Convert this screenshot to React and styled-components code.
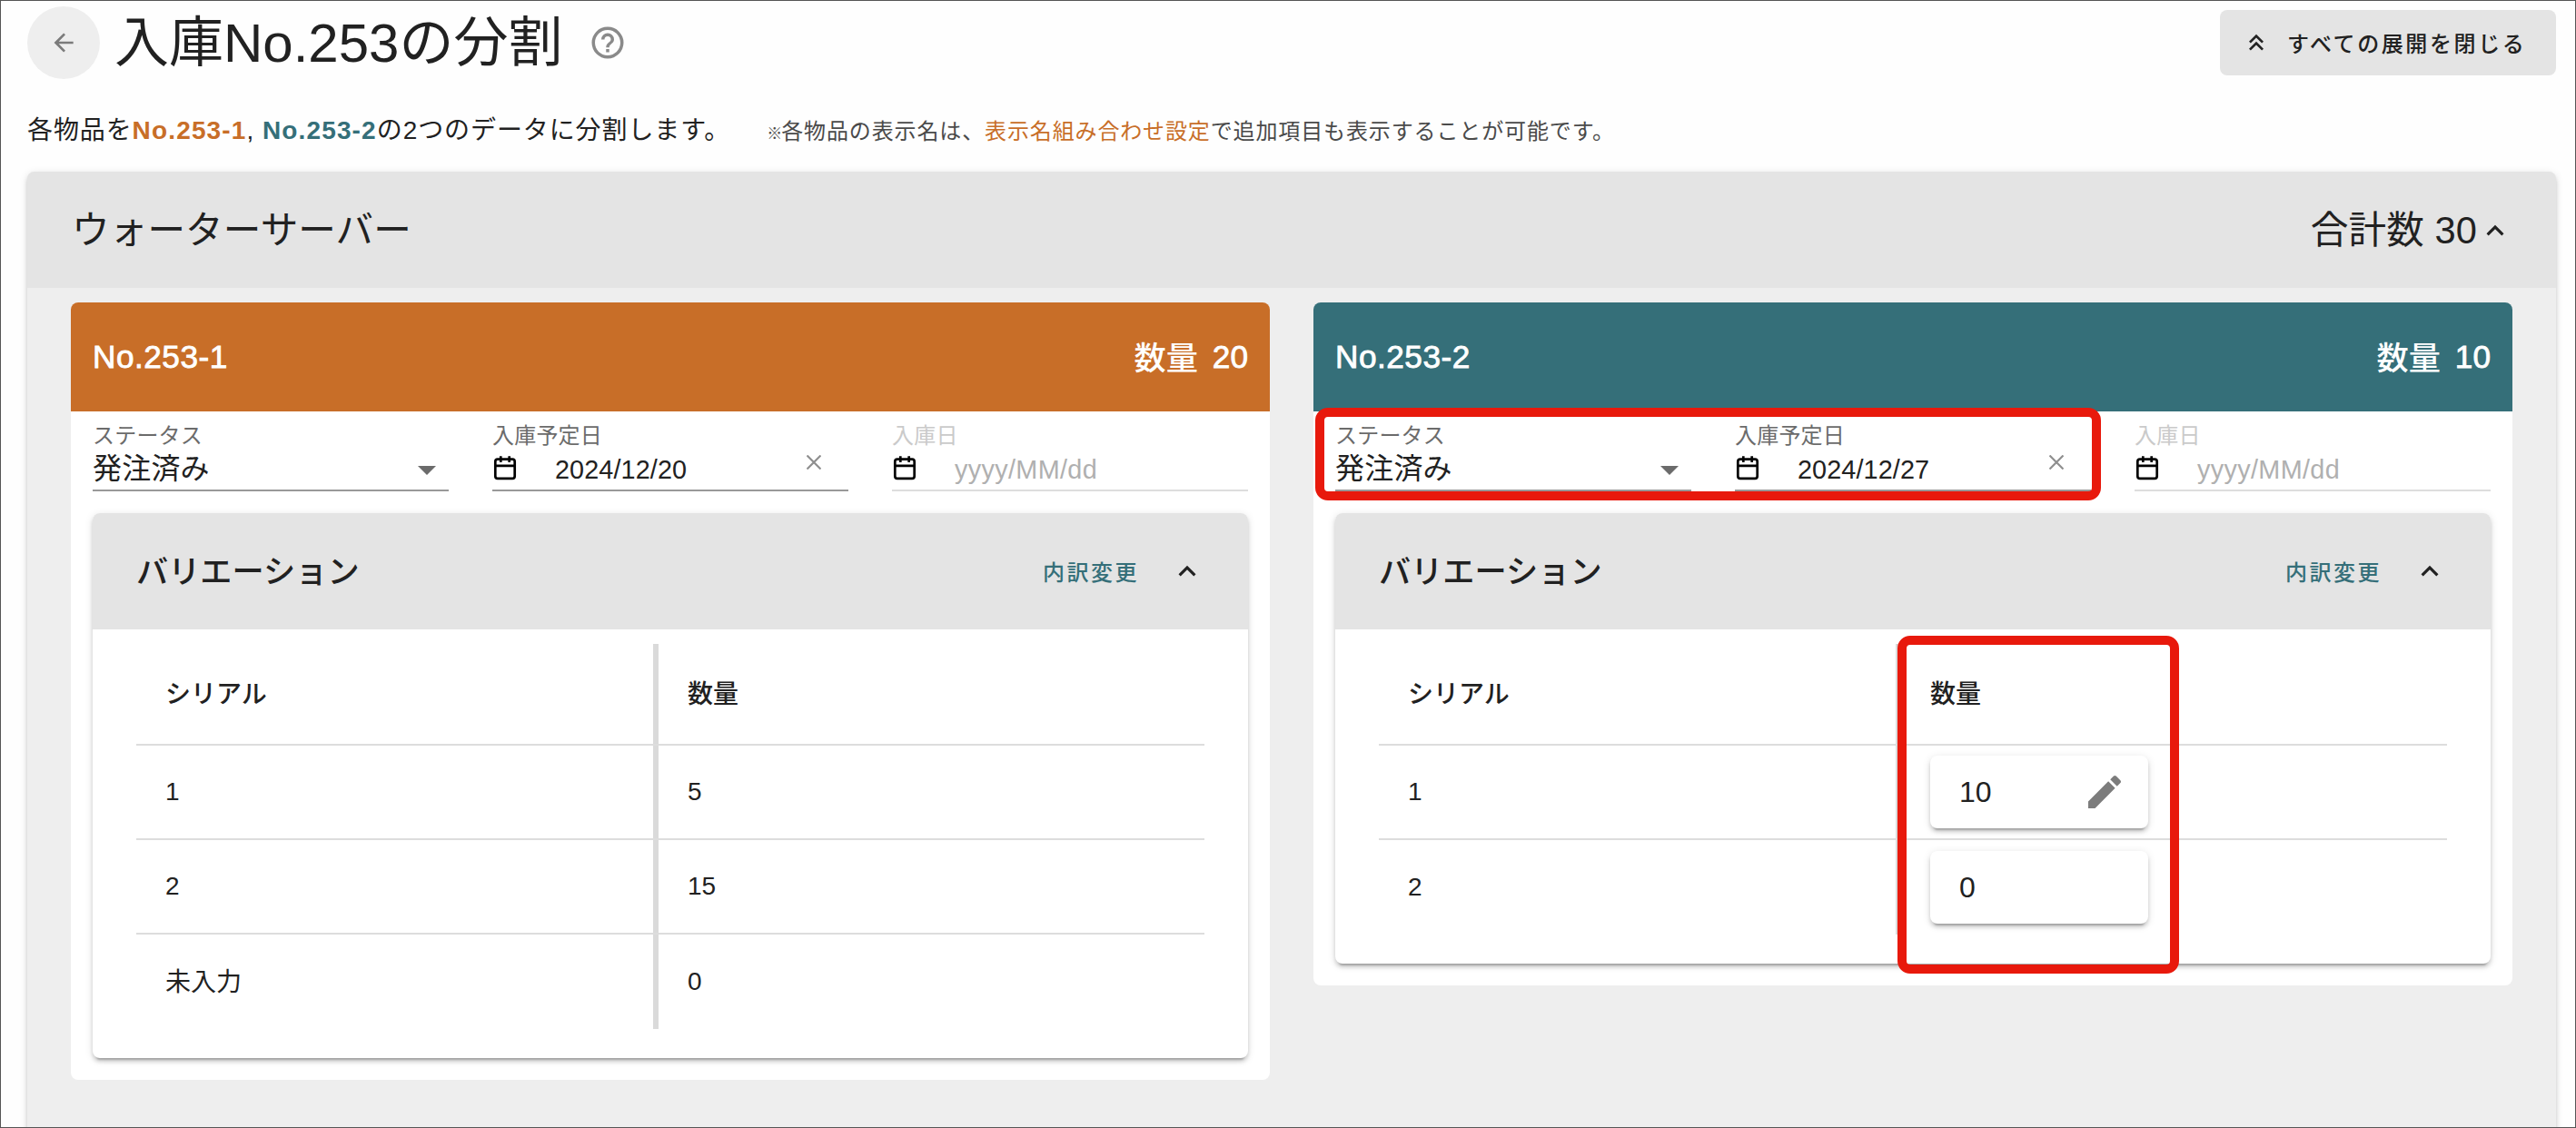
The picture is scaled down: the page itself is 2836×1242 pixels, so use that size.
import React, { useState } from 'react';
import styled, { createGlobalStyle } from 'styled-components';

const GlobalStyle = createGlobalStyle`
    * {
        box-sizing: border-box;
    }
    body {
        margin: 0;
        background: #fefefe;
        color: #212121;
        font-family: "Liberation Sans", "Noto Sans CJK JP", sans-serif;
        font-size: 28px;
    }
    button {
        font-family: inherit;
        color: inherit;
        border: 0;
        padding: 0;
        background: none;
        cursor: pointer;
    }
`
const ORANGE = '#c86e28'
const TEAL = '#356f79'

const shadow = `
    box-shadow: 0 6px 2px -4px rgba(0, 0, 0, 0.2), 0 4px 4px 0 rgba(0, 0, 0, 0.14), 0 2px 10px 0 rgba(0, 0, 0, 0.12);
`
const Page = styled.div`
    width: 2836px;
    height: 1242px;
    padding: 6px 21px 0 29px;
    border: 1px solid #555;
    overflow: hidden;
`
const Head = styled.header`
    display: flex;
    align-items: center;
    height: 80px;
`
const BackButton = styled.button`
    display: flex;
    align-items: center;
    justify-content: center;
    width: 80px;
    height: 80px;
    border-radius: 50%;
    background: #eee;
    color: #7b7b7b;
`
const Title = styled.h1`
    margin: 0 0 0 16px;
    padding-top: 1px;
    font-size: 60px;
    line-height: 80px;
    font-weight: 400;
    white-space: nowrap;
`
const Help = styled.span`
    display: flex;
    margin-left: 29px;
    color: #8a8a8a;
`
const CloseAll = styled.button`
    display: flex;
    align-items: center;
    width: 370px;
    height: 72px;
    margin-left: auto;
    padding-left: 24px;
    border-radius: 8px;
    background: #e4e4e4;
    font-size: 24px;
    font-weight: 500;
    letter-spacing: 2.6px;
    white-space: nowrap;

    svg {
        margin-right: 18px;
    }
`
const CloseText = styled.span`
    padding-bottom: 2px;
`
const Lead = styled.p`
    display: flex;
    align-items: baseline;
    height: 42px;
    margin: 36px 0 24px;
    line-height: 42px;
    letter-spacing: 0.9px;
    white-space: nowrap;
`
const No = styled.b`
    letter-spacing: 1.15px;
    color: ${({ color }) => color};
`
const Note = styled.small`
    margin-left: 40px;
    font-size: 24px;
    letter-spacing: 0.87px;
    color: #4a4a4a;

    a {
        color: ${ORANGE};
        text-decoration: none;
    }
`
const Mark = styled.span`
    font-size: 17px;
    letter-spacing: -1px;
`
const Panel = styled.section`
    height: 1100px;
    border-radius: 8px;
    background: #eee;
    ${shadow}
`
const PanelHead = styled.div`
    display: flex;
    align-items: center;
    justify-content: space-between;
    height: 128px;
    padding: 0 48px 0 49px;
    border-radius: 8px 8px 0 0;
    background: #e4e4e4;
    font-size: 41.6px;
`
const PanelText = styled.span`
    padding-bottom: 6px;
    letter-spacing: 0.1px;
`
const Total = styled.span`
    display: flex;
    align-items: center;

    svg {
        margin: 1px 0 0 1px;
    }
`
const Columns = styled.div`
    display: flex;
    align-items: flex-start;
    gap: 48px;
    padding: 16px 48px;
`
const Card = styled.article`
    position: relative;
    width: 1320px;
    padding-bottom: 24px;
    border-radius: 8px;
    background: #fff;
`
const CardHead = styled.div`
    display: flex;
    align-items: center;
    justify-content: space-between;
    height: 120px;
    padding: 0 24px;
    border-radius: 8px 8px 0 0;
    background: ${({ color }) => color};
    color: #fff;
    font-size: 35.2px;
`
const Latin = styled.span`
    letter-spacing: ${({ spacing }) => spacing || 0}px;
    -webkit-text-stroke: 0.8px #fff;
`
const Count = styled.span`
    display: flex;
    align-items: center;
    gap: 16px;
`
const CountLabel = styled.span`
    padding-bottom: 4px;
    font-weight: 500;
`
const Fields = styled.div`
    display: flex;
    gap: 48px;
    padding: 14px 24px 24px;
`
const Field = styled.div`
    width: 392px;
    border-bottom: 2px solid ${({ disabled }) => (disabled ? '#ddd' : '#999')};
`
const Label = styled.div`
    height: 24px;
    font-size: 24px;
    line-height: 25px;
    letter-spacing: 0.2px;
    color: ${({ disabled }) => (disabled ? '#cacaca' : '#6b6b6b')};
`
const Control = styled.div`
    display: flex;
    align-items: center;
    height: 48px;
    line-height: 48px;
    font-size: 32px;
`
const Value = styled.span`
    padding-top: 2px;
    letter-spacing: 0.2px;
`
const Caret = styled.span`
    margin: 6px 14px 0 auto;
    border: 10px solid transparent;
    border-top-color: #6b6b6b;
    border-bottom: 0;
`
const DateText = styled.span`
    margin-left: 41px;
    padding-top: 3px;
    font-size: 28.8px;
    letter-spacing: ${({ disabled }) => (disabled ? 0.35 : 0.1)}px;
    color: ${({ disabled }) => (disabled ? '#b0b0b0' : 'inherit')};
`
const Clear = styled.button`
    display: flex;
    margin: 0 30px 12px auto;
    color: #8f8f8f;
`
const Variation = styled.div`
    margin: 0 24px;
    border-radius: 8px;
    ${shadow}
`
const VariationHead = styled.div`
    display: flex;
    align-items: center;
    height: 128px;
    padding: 0 48px;
    border-radius: 8px 8px 0 0;
    background: #e4e4e4;
`
const VariationTitle = styled.h2`
    margin: 0;
    padding-bottom: 5px;
    font-size: 35.2px;
    font-weight: 500;
`
const Breakdown = styled.button`
    margin: 0 34px 0 auto;
    padding-bottom: 2px;
    font-size: 24px;
    font-weight: 500;
    letter-spacing: 2.5px;
    color: ${TEAL};
`
const Table = styled.div`
    padding: 16px 48px 32px;
`
const Row = styled.div`
    display: flex;
    height: ${({ head }) => (head ? '112px' : '104px')};
    font-weight: ${({ head }) => (head ? 500 : 400)};
    border-bottom: 2px solid #ddd;

    &:last-child {
        border-bottom: 0;
    }
`
const Cell = styled.div`
    display: flex;
    align-items: center;
    flex: 1;
    padding-left: 32px;

    &:first-child {
        flex: 0 0 575px;
        border-right: 6px solid #dadada;
    }
`
const CellText = styled.span`
    padding-bottom: ${({ lift }) => (lift ? '4px' : 0)};
`
const Quantity = styled.div`
    display: flex;
    align-items: center;
    justify-content: space-between;
    width: 240px;
    height: 80px;
    padding: 0 24px 0 32px;
    border-radius: 8px;
    background: #fff;
    font-size: 32px;
    ${shadow}

    svg {
        color: #7c7c7c;
    }
`
// red frame drawn over the parts of the card being explained
const Highlight = styled.div`
    position: absolute;
    left: ${({ x }) => x}px;
    top: ${({ y }) => y}px;
    width: ${({ w }) => w}px;
    height: ${({ h }) => h}px;
    border: 10px solid #e8190c;
    border-radius: 14px;
    pointer-events: none;
`

const icons = {
    back: 'M20,11V13H8L13.5,18.5L12.08,19.92L4.16,12L12.08,4.08L13.5,5.5L8,11H20Z',
    help: 'M11,18H13V16H11V18M12,2A10,10 0 0,0 2,12A10,10 0 0,0 12,22A10,10 0 0,0 22,12A10,10 0 0,0 12,2M12,20C7.59,20 4,16.41 4,12C4,7.59 7.59,4 12,4C16.41,4 20,7.59 20,12C20,16.41 16.41,20 12,20M12,6A4,4 0 0,0 8,10H10A2,2 0 0,1 12,8A2,2 0 0,1 14,10C14,12 11,11.75 11,15H13C13,12.75 16,12.5 16,10A4,4 0 0,0 12,6Z',
    up: 'M7.41,15.41L12,10.83L16.59,15.41L18,14L12,8L6,14L7.41,15.41Z',
    doubleUp: 'M7.41,18.41L6,17L12,11L18,17L16.59,18.41L12,13.83L7.41,18.41M7.41,12.41L6,11L12,5L18,11L16.59,12.41L12,7.83L7.41,12.41Z',
    pencil: 'M20.71,7.04C21.1,6.65 21.1,6 20.71,5.63L18.37,3.29C18,2.9 17.35,2.9 16.96,3.29L15.12,5.12L18.87,8.87M3,17.25V21H6.75L17.81,9.93L14.06,6.18L3,17.25Z',
}

function Icon({ name, size }) {
    return (
        <svg width={size} height={size} viewBox="0 0 24 24" fill="currentColor">
            <path d={icons[name]} />
        </svg>
    )
}

function CalendarIcon() {
    return (
        <svg width="28" height="28" viewBox="0 0 28 28" fill="none" stroke="#000" strokeWidth="2.7">
            <rect x="3.3" y="4.6" width="21.4" height="21.2" rx="2.6" />
            <path d="M3.3 11.8H24.7M9.3 1.2V8M18.7 1.2V8" />
        </svg>
    )
}

function DateField({ label, value }) {
    return (
        <Field disabled={!value}>
            <Label disabled={!value}>{label}</Label>
            <Control>
                <CalendarIcon />
                <DateText disabled={!value}>{value || 'yyyy/MM/dd'}</DateText>
                {value && (
                    <Clear aria-label="クリア">
                        <svg width="16" height="16" viewBox="0 0 16 16" stroke="currentColor" strokeWidth="2.2">
                            <path d="M0.5 0.5L15.5 15.5M15.5 0.5L0.5 15.5" />
                        </svg>
                    </Clear>
                )}
            </Control>
        </Field>
    )
}

function SplitCard({ no, color, count, date, rows, editable, children }) {
    return (
        <Card>
            <CardHead color={color}>
                <Latin spacing={0.5}>{no}</Latin>
                <Count>
                    <CountLabel>数量</CountLabel>
                    <Latin>{count}</Latin>
                </Count>
            </CardHead>
            <Fields>
                <Field>
                    <Label>ステータス</Label>
                    <Control>
                        <Value>発注済み</Value>
                        <Caret />
                    </Control>
                </Field>
                <DateField label="入庫予定日" value={date} />
                <DateField label="入庫日" />
            </Fields>
            <Variation>
                <VariationHead>
                    <VariationTitle>バリエーション</VariationTitle>
                    <Breakdown>内訳変更</Breakdown>
                    <Icon name="up" size={38} />
                </VariationHead>
                <Table>
                    <Row head>
                        <Cell><CellText lift>シリアル</CellText></Cell>
                        <Cell><CellText lift>数量</CellText></Cell>
                    </Row>
                    {rows.map(([serial, quantity]) => (
                        <Row key={serial}>
                            <Cell><CellText lift={serial === '未入力'}>{serial}</CellText></Cell>
                            <Cell>
                                {editable ? (
                                    <Quantity>
                                        {quantity}
                                        {quantity > 0 && <Icon name="pencil" size={48} />}
                                    </Quantity>
                                ) : quantity}
                            </Cell>
                        </Row>
                    ))}
                </Table>
            </Variation>
            {children}
        </Card>
    )
}

function App() {
    const [open, setOpen] = useState(true);

    return (
        <>
            <GlobalStyle />
            <Page>
                <Head>
                    <BackButton aria-label="戻る"><Icon name="back" size={32} /></BackButton>
                    <Title>入庫No.253の分割</Title>
                    <Help><Icon name="help" size={42} /></Help>
                    <CloseAll onClick={() => setOpen(!open)}>
                        <Icon name="doubleUp" size={32} />
                        <CloseText>すべての展開を閉じる</CloseText>
                    </CloseAll>
                </Head>
                <Lead>
                    <span>
                        各物品を<No color={ORANGE}>No.253-1</No>, <No color={TEAL}>No.253-2</No>の2つのデータに分割します。
                    </span>
                    <Note>
                        <Mark>※</Mark>各物品の表示名は、<a href="#names">表示名組み合わせ設定</a>で追加項目も表示することが可能です。
                    </Note>
                </Lead>
                <Panel>
                    <PanelHead>
                        <PanelText>ウォーターサーバー</PanelText>
                        <Total>
                            <PanelText>合計数 30</PanelText>
                            <Icon name="up" size={38} />
                        </Total>
                    </PanelHead>
                    {open && (
                        <Columns>
                            <SplitCard
                                no="No.253-1"
                                color={ORANGE}
                                count={20}
                                date="2024/12/20"
                                rows={[['1', 5], ['2', 15], ['未入力', 0]]}
                            />
                            <SplitCard
                                no="No.253-2"
                                color={TEAL}
                                count={10}
                                date="2024/12/27"
                                rows={[['1', 10], ['2', 0]]}
                                editable
                            >
                                <Highlight x={2} y={116} w={865} h={102} />
                                <Highlight x={643} y={367} w={310} h={372} />
                            </SplitCard>
                        </Columns>
                    )}
                </Panel>
            </Page>
        </>
    )
}

export default App
